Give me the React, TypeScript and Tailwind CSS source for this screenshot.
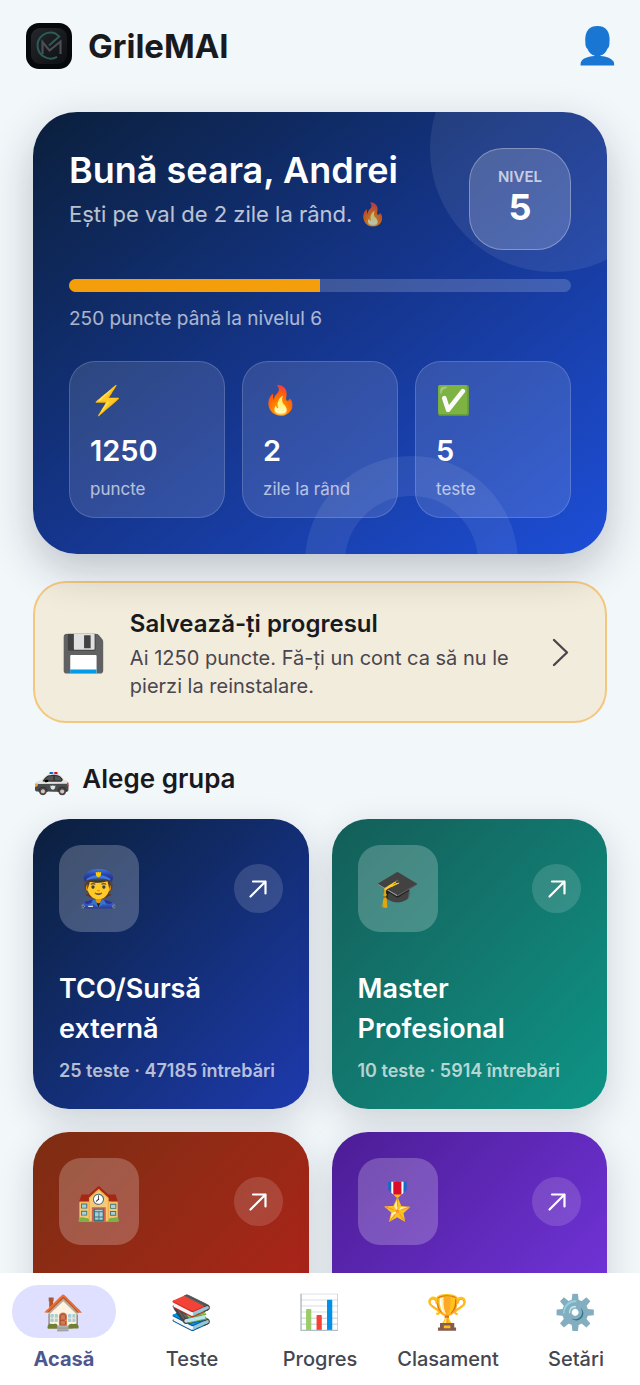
import type { ReactNode } from "react";

const EMOJI = "font-['Noto_Color_Emoji',sans-serif]";

function Emoji({ children, className }: { children: ReactNode; className: string }) {
  return (
    <span aria-hidden="true" className={`${EMOJI} ${className}`}>
      {children}
    </span>
  );
}

function Logo() {
  return (
    <svg viewBox="0 0 46 46" className="size-[46px] shrink-0" aria-hidden="true">
      <defs>
        <linearGradient id="plate" x1="0" y1="0" x2="1" y2="1">
          <stop offset="0" stopColor="#25272b" />
          <stop offset="1" stopColor="#0d0f12" />
        </linearGradient>
      </defs>
      <rect width="46" height="46" rx="13" fill="#07080b" />
      <rect x="5" y="5" width="36" height="36" rx="9" fill="url(#plate)" />
      <path d="M31 33.8A13 13 0 1 1 29.500 10.500L33.200 13.500 23 22.500" fill="none" stroke="#2b5c59" strokeWidth="2" />
      <path d="M16.500 31V19L23.500 27.500 34.500 18.500V31" fill="none" stroke="#4b4e52" strokeWidth="2.2" />
    </svg>
  );
}

function Stat({ icon, value, label }: { icon: string; value: string; label: string }) {
  return (
    <div className="flex flex-col items-start rounded-[26px] border border-white/16 bg-white/12 px-5 pt-[21px] pb-4">
      <Emoji className="text-[28px] leading-9">{icon}</Emoji>
      <span className="mt-3 text-[29px] font-semibold leading-10 text-white">{value}</span>
      <span className="mt-1.5 text-[17px] leading-6 text-white/65">{label}</span>
    </div>
  );
}

type Group = { icon: string; tone: string; title?: string; meta?: string };

const groups: Group[] = [
  { icon: "👮", tone: "from-[#0b1f3c] to-[#1e3aaf]", title: "TCO/Sursă externă", meta: "25 teste · 47185 întrebări" },
  { icon: "🎓", tone: "from-[#135e59] to-[#0d9486]", title: "Master Profesional", meta: "10 teste · 5914 întrebări" },
  { icon: "🏫", tone: "from-[#7c2d12] to-[#b91c1c]" },
  { icon: "🎖️", tone: "from-[#4c1d95] to-[#7c3aed]" },
];

function GroupCard({ icon, tone, title, meta }: Group) {
  return (
    <a
      href="#"
      className={`flex min-h-[290px] flex-col rounded-[36px] bg-linear-to-br p-[26px] shadow-[0_12px_36px_rgba(15,23,42,0.16)] ${tone}`}
    >
      <div className="flex items-center justify-between">
        <div className="flex h-[87px] w-20 items-center justify-center rounded-[22px] bg-white/22">
          <Emoji className="text-[36px] leading-none">{icon}</Emoji>
        </div>
        <div className="flex size-[49px] items-center justify-center rounded-full bg-white/14">
          <svg viewBox="0 0 24 24" className="size-6" fill="none" stroke="white" strokeWidth="2.2" strokeLinecap="round" strokeLinejoin="round" aria-hidden="true">
            <path d="M4.500 19.500 19.500 4.500M7 4.500H19.500V16.500" />
          </svg>
        </div>
      </div>
      {title && <h3 className="mt-[37px] text-[27px] font-semibold leading-10 text-white">{title}</h3>}
      {meta && <p className="mt-2.5 text-lg font-semibold leading-6 whitespace-nowrap text-white/70">{meta}</p>}
    </a>
  );
}

const tabs = [
  { icon: "🏠", label: "Acasă", active: true },
  { icon: "📚", label: "Teste", active: false },
  { icon: "📊", label: "Progres", active: false },
  { icon: "🏆", label: "Clasament", active: false },
  { icon: "⚙️", label: "Setări", active: false },
];

export default function App() {
  return (
    <div className="flex h-screen flex-col bg-[#f2f7fa] font-['Inter',sans-serif] text-[#191a20]">
      <main className="min-h-0 flex-1 overflow-x-hidden overflow-y-auto [scrollbar-width:none]">
        <header className="flex h-[92px] items-center justify-between pr-5 pl-[26px]">
          <div className="flex items-center gap-4">
            <Logo />
            <h1 className="text-[33px] font-bold leading-10">GrileMAI</h1>
          </div>
          <button type="button" aria-label="Profil" className="flex">
            <Emoji className="text-[36px] leading-10">👤</Emoji>
          </button>
        </header>

        <div className="px-[33px] pt-5 pb-8">
          <section className="relative overflow-hidden rounded-[44px] bg-linear-to-br from-[#0b1f3c] via-[#15358c] to-[#1d4ed8] p-9 shadow-[0_16px_44px_rgba(15,23,42,0.24)]">
            <div className="absolute -top-[86px] -right-[69px] size-[246px] rounded-full bg-white/8" />
            <div className="absolute right-[89px] -bottom-[115px] size-[213px] rounded-full border-40 border-white/8" />

            <div className="relative flex items-start justify-between">
              <div>
                <h2 className="text-4xl font-semibold leading-[44px] text-white">Bună seara, Andrei</h2>
                <p className="mt-1.5 text-[22px] leading-8 text-white/72">Ești pe val de 2 zile la rând. 🔥</p>
              </div>
              <div className="flex size-[102px] flex-col items-center justify-center rounded-[34px] border border-white/30 bg-white/18">
                <span className="text-[15px] font-semibold leading-4 text-white/70">NIVEL</span>
                <span className="text-4xl font-bold leading-11 text-white">5</span>
              </div>
            </div>

            <div role="progressbar" aria-label="Nivel" aria-valuenow={50} className="relative mt-[29px] h-[13px] overflow-hidden rounded-full bg-white/18">
              <div className="h-full w-1/2 bg-[#f59e0b]" />
            </div>
            <p className="relative mt-[13px] text-[19px] leading-7 text-white/65">250 puncte până la nivelul 6</p>

            <div className="relative mt-7 grid grid-cols-3 gap-[17px]">
              <Stat icon="⚡" value="1250" label="puncte" />
              <Stat icon="🔥" value="2" label="zile la rând" />
              <Stat icon="✅" value="5" label="teste" />
            </div>
          </section>

          <a href="#" className="mt-[27px] flex items-center rounded-[33px] border-2 border-[#f59e0b]/45 bg-[#f59e0b]/12 px-[26px] pt-[25px] pb-[21px]">
            <Emoji className="text-[36px] leading-none">💾</Emoji>
            <div className="ml-6 flex-1">
              <h2 className="text-2xl font-semibold leading-8">Salvează-ți progresul</h2>
              <p className="mt-1 text-xl leading-7 text-[#49464f]">Ai 1250 puncte. Fă-ți un cont ca să nu le pierzi la reinstalare.</p>
            </div>
            <svg viewBox="0 0 40 40" className="size-10 shrink-0" fill="none" stroke="#49464f" strokeWidth="2.4" strokeLinecap="round" strokeLinejoin="round" aria-hidden="true">
              <path d="M15 6 28 18.500 15 31" />
            </svg>
          </a>

          <div className="mt-9 flex items-center gap-3">
            <Emoji className="text-[30px] leading-10">🚓</Emoji>
            <h2 className="text-[26px] font-semibold leading-10">Alege grupa</h2>
          </div>

          <div className="mt-5 grid auto-rows-fr grid-cols-2 gap-[23px]">
            {groups.map((group) => (
              <GroupCard key={group.icon} {...group} />
            ))}
          </div>
        </div>
      </main>

      <nav className="grid h-28 shrink-0 grid-cols-5 bg-white">
        {tabs.map((tab) => (
          <a key={tab.label} href="#" className="flex flex-col items-center pt-3">
            <span className={`flex h-[53px] w-[104px] items-center justify-center rounded-full ${tab.active ? "bg-[#dfe0ff]" : ""}`}>
              <Emoji className="text-[34px] leading-none">{tab.icon}</Emoji>
            </span>
            <span className={`mt-[7px] text-xl leading-7 ${tab.active ? "font-bold text-[#4c5790]" : "font-medium text-[#46464f]"}`}>{tab.label}</span>
          </a>
        ))}
      </nav>
    </div>
  );
}
